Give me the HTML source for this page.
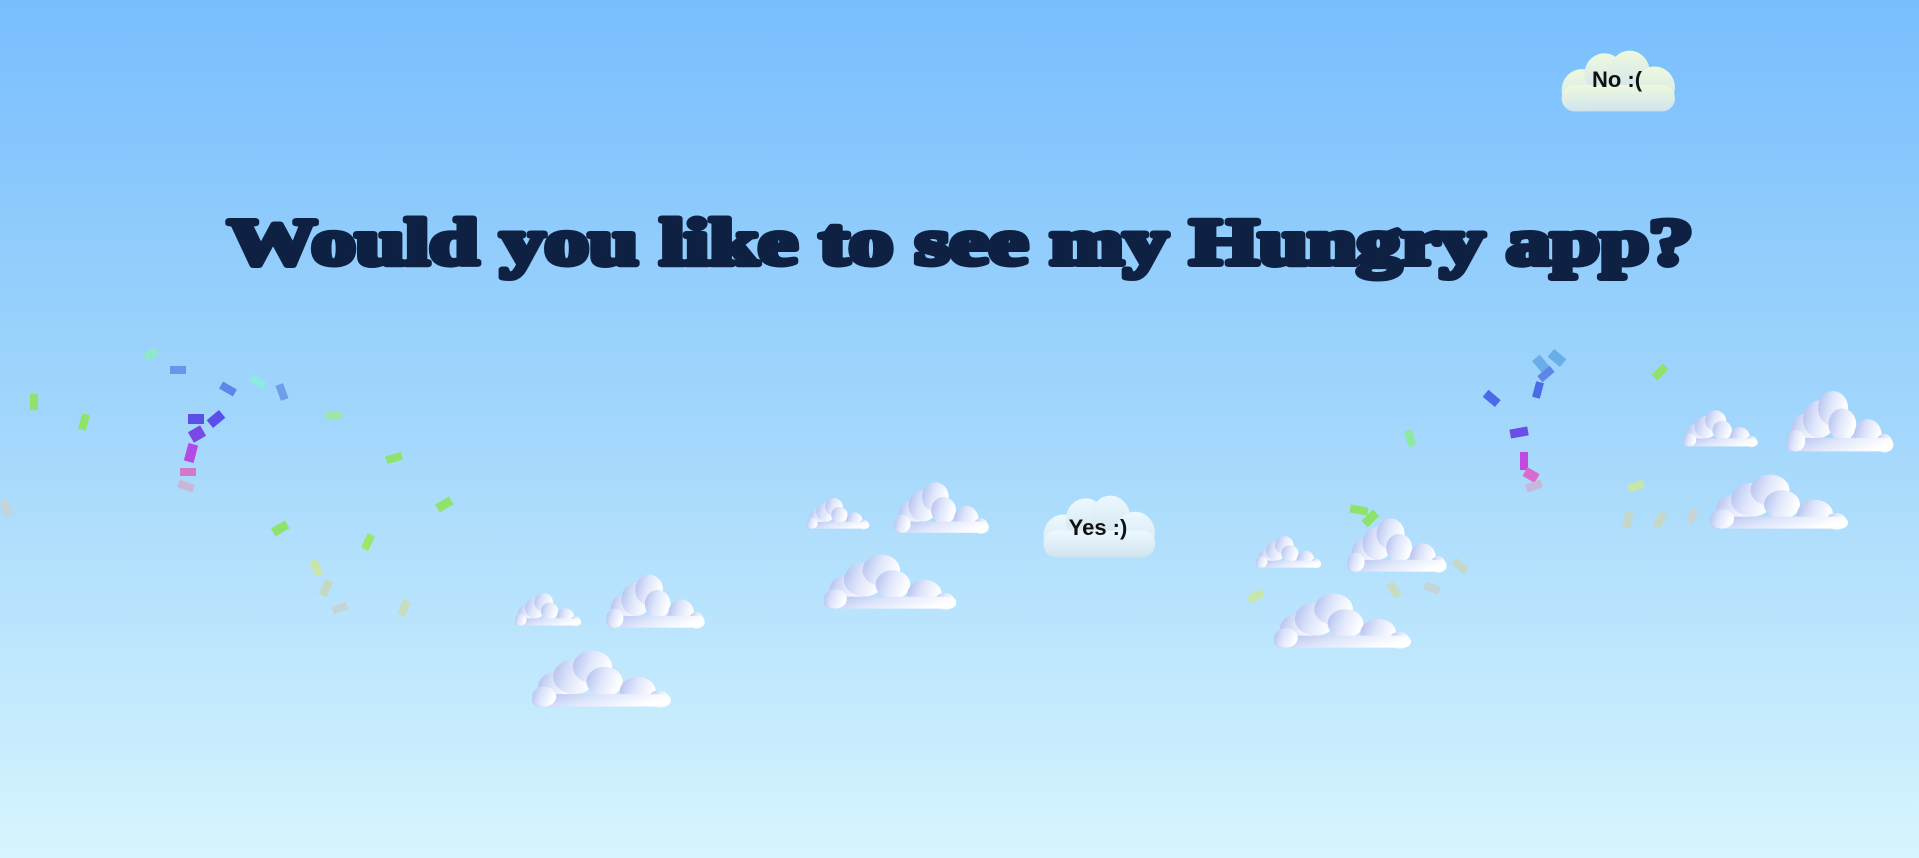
<!DOCTYPE html>
<html><head><meta charset="utf-8"><style>
html,body{margin:0;padding:0;width:1919px;height:858px;overflow:hidden}
body{background:linear-gradient(180deg,#78befd 0%,#a3d7fc 50%,#d7f5fe 100%);font-family:"Liberation Sans",sans-serif;position:relative}
svg{position:absolute;left:0;top:0}
.btn{position:absolute;display:flex;align-items:center;justify-content:center;font-weight:bold;font-size:22px;color:#111}
</style></head><body>
<svg width="1919" height="858" viewBox="0 0 1919 858">
<defs>
<linearGradient id="cg" x1="0" y1="0" x2="1" y2="0.3">
<stop offset="0" stop-color="#aebcec"/><stop offset="0.5" stop-color="#dfe6fb"/><stop offset="1" stop-color="#ffffff"/></linearGradient>
<linearGradient id="bg1" x1="0" y1="0" x2="0" y2="1">
<stop offset="0" stop-color="#eef8ff"/><stop offset="1" stop-color="#cfe4ee"/></linearGradient>
<linearGradient id="bg2" x1="0" y1="0" x2="0" y2="1">
<stop offset="0" stop-color="#eef9dd"/><stop offset="1" stop-color="#cfe4ee"/></linearGradient>
<symbol id="cl" viewBox="0 0 100 50" preserveAspectRatio="none">
<g fill="url(#cg)"><circle cx="20" cy="32" r="12"/><circle cx="32" cy="24" r="14"/><circle cx="44" cy="16" r="13"/><circle cx="52" cy="28" r="12"/><circle cx="74" cy="36" r="12"/><circle cx="88" cy="42" r="7"/><rect x="4" y="38" width="92" height="10" rx="5"/><circle cx="12" cy="40" r="8"/></g>
</symbol>
<symbol id="bc" viewBox="0 0 100 50" preserveAspectRatio="none">
<g><circle cx="22" cy="32" r="16"/><circle cx="40" cy="20" r="16"/><circle cx="60" cy="18" r="16"/><circle cx="80" cy="30" r="16"/><rect x="6" y="28" width="90" height="20" rx="10"/></g>
</symbol>
</defs>
<text x="228" y="264" textLength="1465" lengthAdjust="spacingAndGlyphs" font-family="Liberation Serif, serif" font-weight="bold" font-size="66" fill="#0e2143" stroke="#0e2143" stroke-width="6" stroke-linejoin="round">Would you like to see my Hungry app?</text>
<g>
<use href="#cl" x="512" y="591" width="72" height="36"/>
<use href="#cl" x="602" y="571" width="107" height="59"/>
<use href="#cl" x="526" y="647" width="151" height="62"/>
<use href="#cl" x="804" y="496" width="68" height="34"/>
<use href="#cl" x="890" y="479" width="103" height="56"/>
<use href="#cl" x="818" y="551" width="144" height="60"/>
<use href="#cl" x="1253" y="534" width="71" height="35"/>
<use href="#cl" x="1343" y="515" width="108" height="59"/>
<use href="#cl" x="1268" y="590" width="149" height="60"/>
<use href="#cl" x="1680" y="408" width="81" height="40"/>
<use href="#cl" x="1782" y="387" width="116" height="67"/>
<use href="#cl" x="1704" y="471" width="150" height="60"/>
</g>
<use href="#bc" x="1036" y="493" width="124" height="67" fill="url(#bg1)"/>
<use href="#bc" x="1554" y="48" width="126" height="66" fill="url(#bg2)"/>
<g>
<rect x="144" y="350" width="14" height="8" fill="#8ee9c9" transform="rotate(-30 151 354)"/>
<rect x="170" y="366" width="16" height="8" fill="#6b95ec"/>
<rect x="220" y="385" width="16" height="8" fill="#5d86e8" transform="rotate(30 228 389)"/>
<rect x="250" y="378" width="16" height="8" fill="#8ee9e0" transform="rotate(35 258 382)"/>
<rect x="278" y="384" width="8" height="16" fill="#6c9eea" transform="rotate(-20 282 392)"/>
<rect x="30" y="394" width="8" height="16" fill="#8fe26a"/>
<rect x="80" y="414" width="8" height="16" fill="#8fe26a" transform="rotate(15 84 422)"/>
<rect x="188" y="414" width="16" height="10" fill="#5b4fe8"/>
<rect x="208" y="414" width="16" height="10" fill="#5b4fe8" transform="rotate(-40 216 419)"/>
<rect x="190" y="428" width="14" height="12" fill="#7a48e6" transform="rotate(-30 197 434)"/>
<rect x="186" y="444" width="10" height="18" fill="#b44ae6" transform="rotate(15 191 453)"/>
<rect x="180" y="468" width="16" height="8" fill="#d07ac8"/>
<rect x="178" y="482" width="16" height="8" fill="#c9b7d8" transform="rotate(20 186 486)"/>
<rect x="326" y="412" width="16" height="8" fill="#9ae8a8"/>
<rect x="386" y="454" width="16" height="8" fill="#8fe26a" transform="rotate(-15 394 458)"/>
<rect x="436" y="500" width="16" height="9" fill="#8fe26a" transform="rotate(-30 444 504)"/>
<rect x="272" y="524" width="16" height="9" fill="#8fe26a" transform="rotate(-30 280 528)"/>
<rect x="364" y="534" width="8" height="16" fill="#9ae86a" transform="rotate(25 368 542)"/>
<rect x="312" y="560" width="8" height="16" fill="#c8e6a8" transform="rotate(-25 316 568)"/>
<rect x="322" y="580" width="8" height="16" fill="#c5d8c0" transform="rotate(25 326 588)"/>
<rect x="332" y="604" width="16" height="8" fill="#c5d4d8" transform="rotate(-20 340 608)"/>
<rect x="400" y="600" width="8" height="16" fill="#c8dcc0" transform="rotate(20 404 608)"/>
<rect x="2" y="500" width="8" height="16" fill="#c5d4d8" transform="rotate(-25 6 508)"/>
<rect x="1536" y="356" width="10" height="16" fill="#6aaee8" transform="rotate(-40 1541 364)"/>
<rect x="1552" y="350" width="10" height="16" fill="#6aaee8" transform="rotate(-50 1557 358)"/>
<rect x="1538" y="370" width="16" height="8" fill="#5d86e8" transform="rotate(-40 1546 374)"/>
<rect x="1534" y="382" width="8" height="16" fill="#4a6ae8" transform="rotate(15 1538 390)"/>
<rect x="1484" y="394" width="16" height="9" fill="#4a6ae8" transform="rotate(40 1492 398)"/>
<rect x="1510" y="428" width="18" height="9" fill="#6a4ee8" transform="rotate(-10 1519 432)"/>
<rect x="1520" y="452" width="8" height="18" fill="#c04ae0"/>
<rect x="1524" y="470" width="14" height="10" fill="#d86ad0" transform="rotate(30 1531 475)"/>
<rect x="1526" y="482" width="16" height="8" fill="#c8b7d8" transform="rotate(-20 1534 486)"/>
<rect x="1652" y="368" width="16" height="8" fill="#8fe26a" transform="rotate(-45 1660 372)"/>
<rect x="1406" y="430" width="8" height="16" fill="#8ee9a0" transform="rotate(-15 1410 438)"/>
<rect x="1350" y="506" width="18" height="8" fill="#8fe26a" transform="rotate(10 1359 510)"/>
<rect x="1362" y="514" width="16" height="9" fill="#8fe26a" transform="rotate(-45 1370 518)"/>
<rect x="1628" y="482" width="16" height="8" fill="#c8e6a8" transform="rotate(-20 1636 486)"/>
<rect x="1624" y="512" width="8" height="16" fill="#c5d8c8" transform="rotate(15 1628 520)"/>
<rect x="1656" y="512" width="8" height="16" fill="#c5d8c8" transform="rotate(30 1660 520)"/>
<rect x="1688" y="508" width="8" height="16" fill="#c5d4d8" transform="rotate(25 1692 516)"/>
<rect x="1452" y="562" width="16" height="8" fill="#c5d8c8" transform="rotate(40 1460 566)"/>
<rect x="1390" y="582" width="8" height="16" fill="#c8dcc0" transform="rotate(-35 1394 590)"/>
<rect x="1424" y="584" width="16" height="8" fill="#c5d4d8" transform="rotate(20 1432 588)"/>
<rect x="1248" y="592" width="16" height="8" fill="#c8e6a8" transform="rotate(-30 1256 596)"/>
</g>
</svg>
<div class="btn" style="left:1036px;top:500px;width:124px;height:56px">Yes :)</div>
<div class="btn" style="left:1554px;top:52px;width:126px;height:56px">No :(</div>
</body></html>
